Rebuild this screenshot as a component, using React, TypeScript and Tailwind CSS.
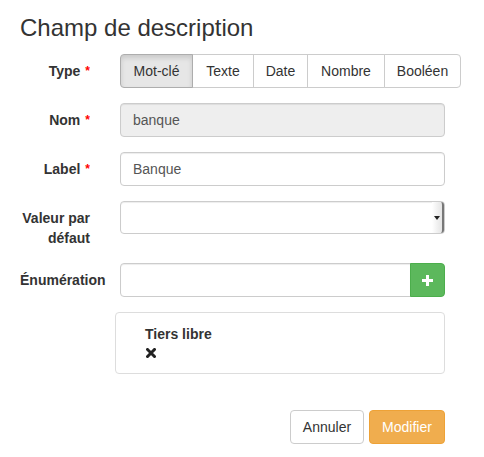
import React from "react";

const FONT = "font-['Liberation_Sans',Arial,sans-serif]";

function Req() {
  return <span className="text-[#ff0000] text-[12px] align-top ml-[5px]">*</span>;
}

function Row({ label, children, last }: { label: React.ReactNode; children: React.ReactNode; last?: boolean }) {
  return (
    <div className={`flex items-start ${last ? "" : "mb-[15px]"}`}>
      <label className="w-[70px] ml-[20px] mr-[30px] pt-[7px] text-right font-bold text-[14px] leading-[20px] text-[#333] whitespace-nowrap">
        {label}
      </label>
      {children}
    </div>
  );
}

const types = [
  { t: "Mot-clé", w: "w-[73px]" },
  { t: "Texte", w: "w-[62px]" },
  { t: "Date", w: "w-[55px]" },
  { t: "Nombre", w: "w-[78px]" },
  { t: "Booléen", w: "w-[77px]" },
];

export default function App() {
  return (
    <div className={`${FONT} w-[484px] h-[457px] bg-white text-[#333] text-[14px] overflow-hidden`}>
      <h3 className="pt-[15px] pl-[20px] text-[24px] leading-[26.4px] mb-[13px]">Champ de description</h3>

      <Row label={<>Type<Req /></>}>
        <div className="flex">
          {types.map(({ t, w }, i) => (
            <button
              key={t}
              className={`${w} h-[34px] border text-[14px] leading-[20px] text-[#333] text-center ${i > 0 ? "-ml-px" : ""} ${i === 0 ? "rounded-l-[4px] bg-[#e6e6e6] border-[#adadad] shadow-[inset_0_3px_5px_rgba(0,0,0,0.125)] relative z-10" : "bg-white border-[#ccc]"} ${i === types.length - 1 ? "rounded-r-[4px]" : ""}`}
            >
              {t}
            </button>
          ))}
        </div>
      </Row>

      <Row label={<>Nom<Req /></>}>
        <div className="w-[325px] h-[34px] px-[12px] py-[6px] border border-[#ccc] rounded-[4px] bg-[#eee] shadow-[inset_0_1px_1px_rgba(0,0,0,0.075)] text-[#555] leading-[20px]">
          banque
        </div>
      </Row>

      <Row label={<>Label<Req /></>}>
        <div className="w-[325px] h-[34px] px-[12px] py-[6px] border border-[#ccc] rounded-[4px] bg-white shadow-[inset_0_1px_1px_rgba(0,0,0,0.075)] text-[#555] leading-[20px]">
          Banque
        </div>
      </Row>

      <Row label={<>Valeur par<br />défaut</>}>
        <div className="w-[325px] h-[33px] border border-[#ccc] rounded-[4px] bg-white shadow-[inset_0_1px_1px_rgba(0,0,0,0.075)] flex justify-end">
          <div className="w-[12px] h-full flex items-center justify-center bg-gradient-to-r from-white to-[#e4e4e4] border-r-2 border-[#777] rounded-r-[3px]">
            <svg width="6" height="4" viewBox="0 0 6 4">
              <path d="M0 0h6L3 4z" fill="#222" />
            </svg>
          </div>
        </div>
      </Row>

      <Row label="Énumération">
        <div className="flex w-[325px] h-[34px]">
          <div className="flex-1 border border-[#ccc] rounded-l-[4px] bg-white shadow-[inset_0_1px_1px_rgba(0,0,0,0.075)]" />
          <button className="w-[35px] h-[34px] bg-[#5cb85c] border border-[#4cae4c] rounded-r-[4px] flex items-center justify-center -ml-px">
            <svg width="11" height="11" viewBox="0 0 11 11">
              <path d="M4 0h3v4h4v3H7v4H4V7H0V4h4z" fill="#fff" />
            </svg>
          </button>
        </div>
      </Row>

      <div className="ml-[115px] w-[330px] h-[62px] border border-[#ddd] rounded-[4px] bg-white pl-[29px] pt-[12px]">
        <div className="font-bold text-[14px] leading-[18px]">Tiers libre</div>
        <svg width="10" height="10" viewBox="0 0 10 10" className="mt-[5px] ml-px">
          <path d="M1.5 1.5l7 7M8.5 1.5l-7 7" stroke="#222" strokeWidth="3" strokeLinecap="square" />
        </svg>
      </div>

      <div className="flex justify-end gap-[5px] mt-[36px] w-[445px]">
        <button className="w-[74px] h-[34px] border border-[#ccc] rounded-[4px] bg-white text-[#333] text-[14px] leading-[20px]">Annuler</button>
        <button className="w-[76px] h-[34px] border border-[#eea236] rounded-[4px] bg-[#f0ad4e] text-white text-[14px] leading-[20px]">Modifier</button>
      </div>
    </div>
  );
}
